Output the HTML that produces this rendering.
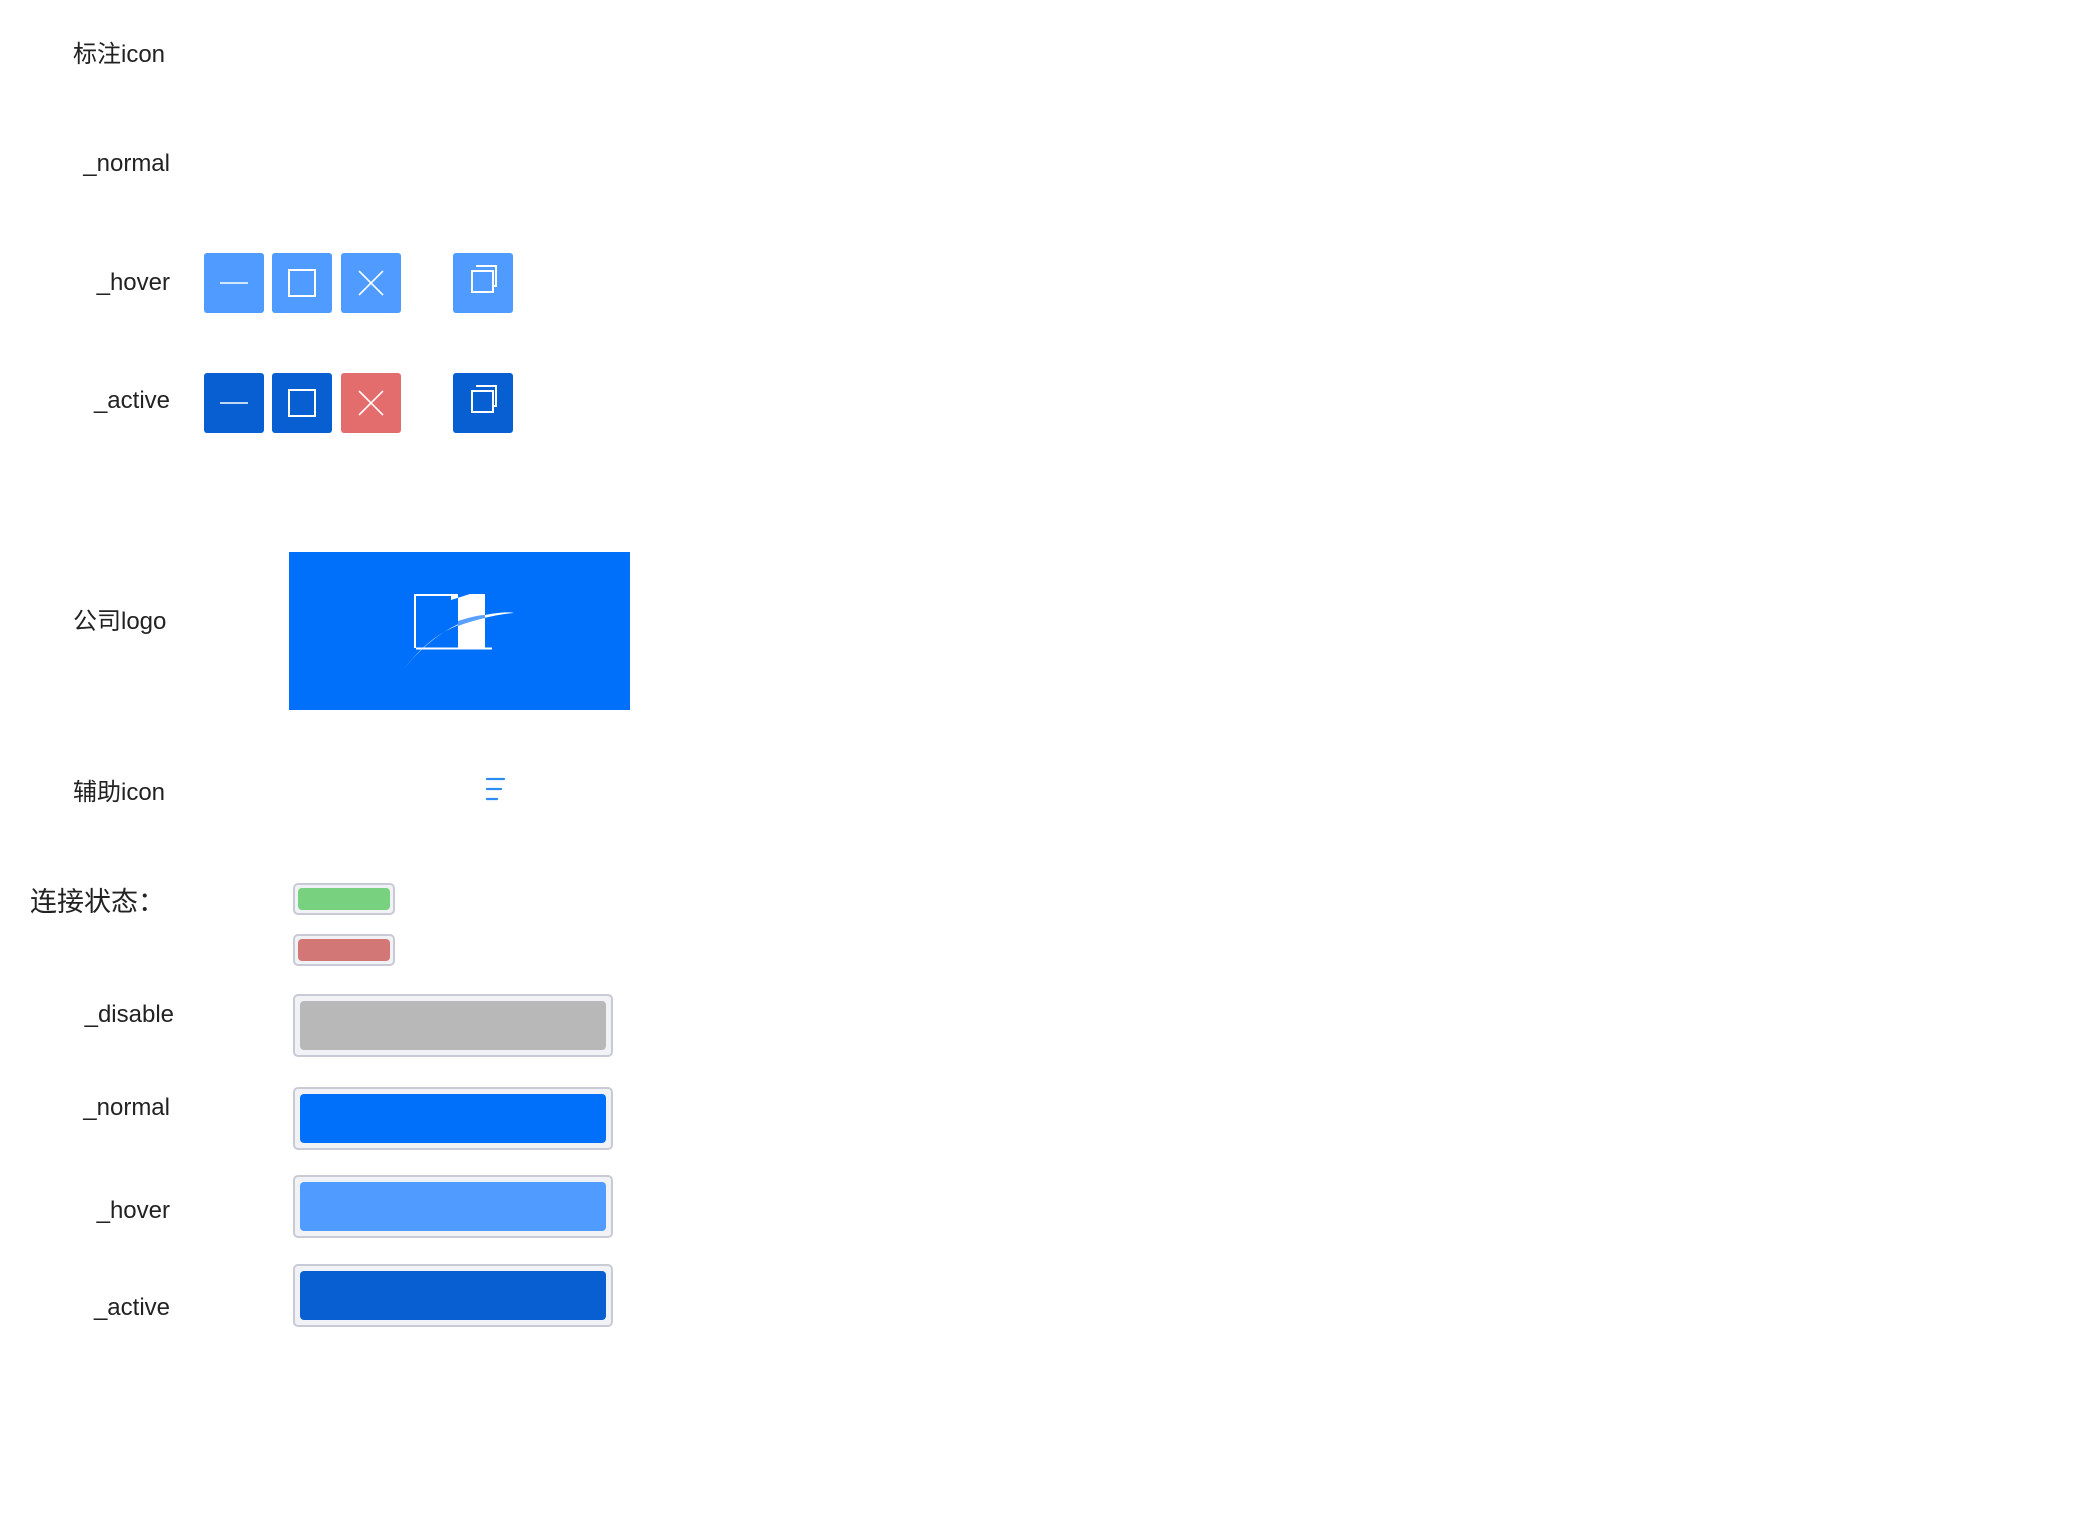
<!DOCTYPE html>
<html><head><meta charset="utf-8"><style>
body{margin:0;width:2100px;height:1536px;background:#fff;position:relative;overflow:hidden;font-family:"Liberation Sans","Noto Sans CJK SC",sans-serif;color:#222}
.l{position:absolute;font-size:24px;line-height:30px;transform:translateY(-15px);white-space:nowrap}
.r{right:1930px;text-align:right}
.b{position:absolute;width:60px;height:60px;border-radius:3px}
.b svg{position:absolute;left:0;top:0}
.h{background:#4f9bff}.a{background:#085fd1}.x{background:#e36c6c}
.bar{position:absolute;box-sizing:border-box;border:2px solid #c8cad6;background:#f1f2f6;border-radius:5px;padding:3px}
.bar div{width:100%;height:100%;border-radius:4px}
</style></head><body>
<div class="l" style="left:73px;top:55px">标注icon</div>
<div class="l r" style="top:164px">_normal</div>
<div class="l r" style="top:283px">_hover</div>
<div class="l r" style="top:401px">_active</div>
<div class="l" style="left:73px;top:622px">公司logo</div>
<div class="l" style="left:73px;top:793px">辅助icon</div>
<div class="l" style="left:30px;top:902px;font-size:27px">连接状态：</div>
<div class="l r" style="top:1015px;right:1926px">_disable</div>
<div class="l r" style="top:1108px">_normal</div>
<div class="l r" style="top:1211px">_hover</div>
<div class="l r" style="top:1308px">_active</div>

<div class="b h" style="left:204px;top:253px"><svg width="60" height="60"><line x1="16" y1="30" x2="44" y2="30" stroke="#fff" stroke-width="1.6"/></svg></div>
<div class="b h" style="left:272px;top:253px"><svg width="60" height="60"><rect x="17" y="17" width="26" height="26" fill="none" stroke="#fff" stroke-width="2"/></svg></div>
<div class="b h" style="left:341px;top:253px"><svg width="60" height="60"><path d="M18 18L42 42M42 18L18 42" stroke="#fff" stroke-width="1.6"/></svg></div>
<div class="b h" style="left:453px;top:253px"><svg width="60" height="60"><path d="M23 13H43V33H39" fill="none" stroke="#fff" stroke-width="2"/><rect x="19" y="18" width="21" height="21" fill="none" stroke="#fff" stroke-width="2"/></svg></div>
<div class="b a" style="left:204px;top:373px"><svg width="60" height="60"><line x1="16" y1="30" x2="44" y2="30" stroke="#fff" stroke-width="1.6"/></svg></div>
<div class="b a" style="left:272px;top:373px"><svg width="60" height="60"><rect x="17" y="17" width="26" height="26" fill="none" stroke="#fff" stroke-width="2"/></svg></div>
<div class="b x" style="left:341px;top:373px"><svg width="60" height="60"><path d="M18 18L42 42M42 18L18 42" stroke="#fff" stroke-width="1.6"/></svg></div>
<div class="b a" style="left:453px;top:373px"><svg width="60" height="60"><path d="M23 13H43V33H39" fill="none" stroke="#fff" stroke-width="2"/><rect x="19" y="18" width="21" height="21" fill="none" stroke="#fff" stroke-width="2"/></svg></div>

<div style="position:absolute;left:289px;top:552px;width:341px;height:158px;background:#0070fa">
<svg width="341" height="158" style="position:absolute;left:0;top:0">
<g transform="translate(-289,-552)">
<path d="M451 595H415V648" fill="none" stroke="#fff" stroke-width="2"/>
<path d="M451 594H458V648H485V594H470L451 600Z" fill="#fff"/>
<line x1="416" y1="648.5" x2="492" y2="648.5" stroke="#fff" stroke-width="2"/>
<path d="M404 669C430 636 460 620 485 615C500 612 510 612 514 613C500 614 488 617 470 621C440 630 422 646 404 669Z" fill="#fff"/>
<path d="M458 621C468 618 478 615 485 615V618C476 620 466 623 458 626Z" fill="#5aa0ff"/>
</g></svg></div>

<svg style="position:absolute;left:480px;top:770px" width="40" height="40">
<g stroke="#2b8cf5" stroke-width="2.2" stroke-linecap="round"><line x1="7" y1="9" x2="24" y2="9"/><line x1="7" y1="19" x2="21" y2="19"/><line x1="7" y1="29" x2="17" y2="29"/></g></svg>

<div class="bar" style="left:293px;top:883px;width:102px;height:32px"><div style="background:#77d17f"></div></div>
<div class="bar" style="left:293px;top:934px;width:102px;height:32px"><div style="background:#d27676"></div></div>
<div class="bar" style="left:293px;top:994px;width:320px;height:63px;padding:5px"><div style="background:#b8b8b8"></div></div>
<div class="bar" style="left:293px;top:1087px;width:320px;height:63px;padding:5px"><div style="background:#0070fa"></div></div>
<div class="bar" style="left:293px;top:1175px;width:320px;height:63px;padding:5px"><div style="background:#4f9bff"></div></div>
<div class="bar" style="left:293px;top:1264px;width:320px;height:63px;padding:5px"><div style="background:#085fd1"></div></div>
</body></html>
